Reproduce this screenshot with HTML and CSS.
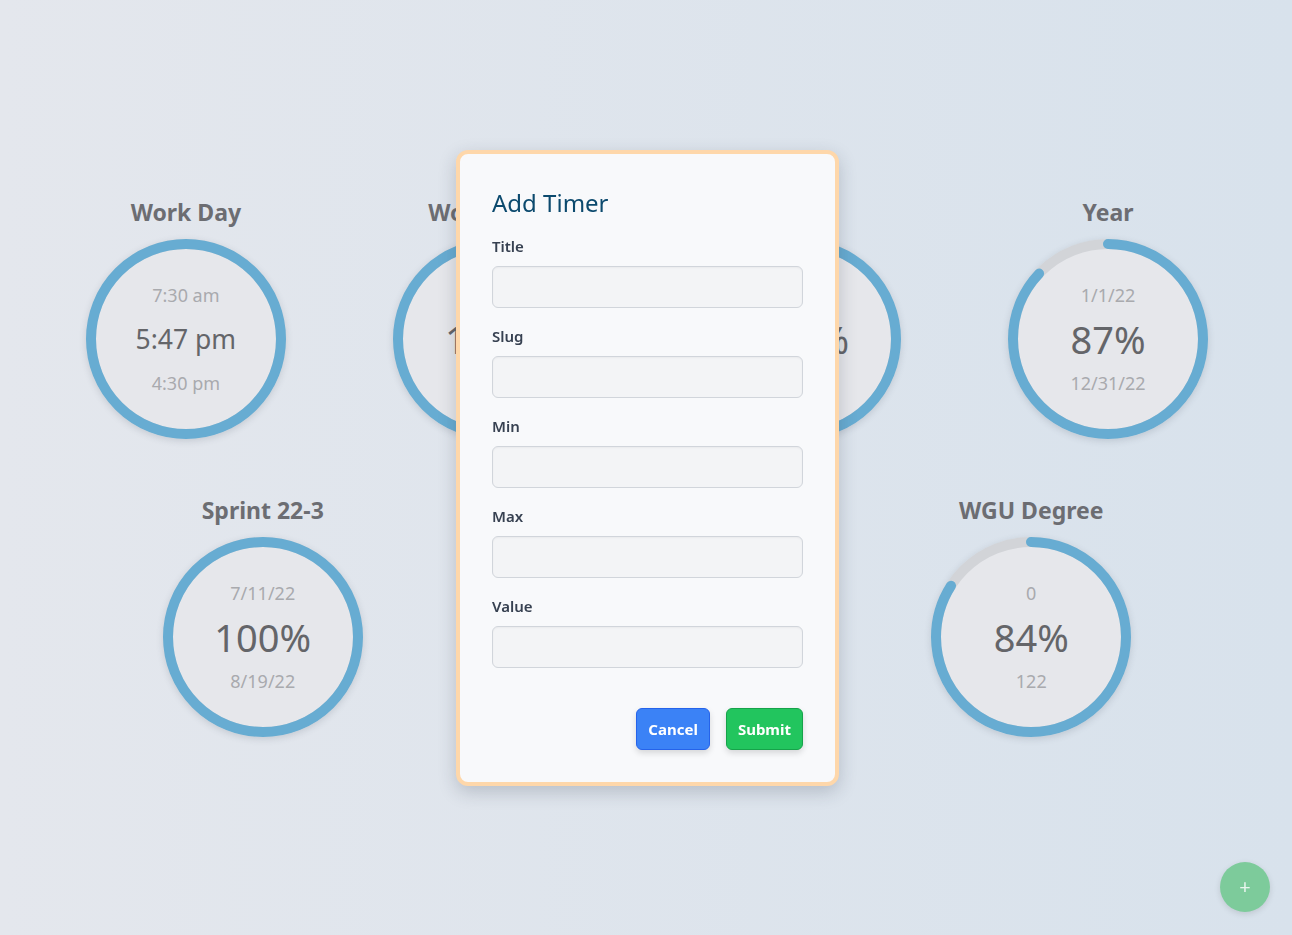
FILE: index.html
```html
<!DOCTYPE html>
<html lang="en">
<head>
<meta charset="utf-8">
<title>Timers</title>
<link rel="stylesheet" href="styles.css">
</head>
<body>
<main class="board">
  <section class="timer">
    <h2 class="timer-title">Work Day</h2>
    <div class="dial">
      <svg class="ring" viewBox="0 0 200 200"><circle class="track" cx="100" cy="100" r="95"/><circle class="progress" cx="100" cy="100" r="95" stroke-dasharray="597 597" transform="rotate(-90 100 100)"/></svg>
      <div class="dial-text"><span class="sub">7:30 am</span><span class="main time">5:47 pm</span><span class="sub">4:30 pm</span></div>
    </div>
  </section>
  <section class="timer">
    <h2 class="timer-title">Work Week</h2>
    <div class="dial">
      <svg class="ring" viewBox="0 0 200 200"><circle class="track" cx="100" cy="100" r="95"/><circle class="progress" cx="100" cy="100" r="95" stroke-dasharray="597 597" transform="rotate(-90 100 100)"/></svg>
      <div class="dial-text"><span class="sub">7/25/22</span><span class="main">100%</span><span class="sub">7/29/22</span></div>
    </div>
  </section>
  <section class="timer">
    <h2 class="timer-title">Month</h2>
    <div class="dial">
      <svg class="ring" viewBox="0 0 200 200"><circle class="track" cx="100" cy="100" r="95"/><circle class="progress" cx="100" cy="100" r="95" stroke-dasharray="597 597" transform="rotate(-90 100 100)"/></svg>
      <div class="dial-text"><span class="sub">7/1/22</span><span class="main">100%</span><span class="sub">7/31/22</span></div>
    </div>
  </section>
  <section class="timer">
    <h2 class="timer-title">Year</h2>
    <div class="dial">
      <svg class="ring" viewBox="0 0 200 200"><circle class="track" cx="100" cy="100" r="95"/><circle class="progress" cx="100" cy="100" r="95" stroke-dasharray="519 597" transform="rotate(-90 100 100)"/></svg>
      <div class="dial-text"><span class="sub">1/1/22</span><span class="main">87%</span><span class="sub">12/31/22</span></div>
    </div>
  </section>
  <section class="timer">
    <h2 class="timer-title">Sprint 22-3</h2>
    <div class="dial">
      <svg class="ring" viewBox="0 0 200 200"><circle class="track" cx="100" cy="100" r="95"/><circle class="progress" cx="100" cy="100" r="95" stroke-dasharray="597 597" transform="rotate(-90 100 100)"/></svg>
      <div class="dial-text"><span class="sub">7/11/22</span><span class="main">100%</span><span class="sub">8/19/22</span></div>
    </div>
  </section>
  <section class="timer">
    <h2 class="timer-title">Quarter</h2>
    <div class="dial">
      <svg class="ring" viewBox="0 0 200 200"><circle class="track" cx="100" cy="100" r="95"/><circle class="progress" cx="100" cy="100" r="95" stroke-dasharray="597 597" transform="rotate(-90 100 100)"/></svg>
      <div class="dial-text"><span class="sub">7/1/22</span><span class="main">100%</span><span class="sub">9/30/22</span></div>
    </div>
  </section>
  <section class="timer">
    <h2 class="timer-title">WGU Degree</h2>
    <div class="dial">
      <svg class="ring" viewBox="0 0 200 200"><circle class="track" cx="100" cy="100" r="95"/><circle class="progress" cx="100" cy="100" r="95" stroke-dasharray="501 597" transform="rotate(-90 100 100)"/></svg>
      <div class="dial-text"><span class="sub">0</span><span class="main">84%</span><span class="sub">122</span></div>
    </div>
  </section>
</main>

<div class="modal">
  <h1 class="modal-title">Add Timer</h1>
  <form class="form">
    <label class="field"><span class="label">Title</span><input class="input" type="text"></label>
    <label class="field"><span class="label">Slug</span><input class="input" type="text"></label>
    <label class="field"><span class="label">Min</span><input class="input" type="text"></label>
    <label class="field"><span class="label">Max</span><input class="input" type="text"></label>
    <label class="field"><span class="label">Value</span><input class="input" type="text"></label>
    <div class="actions">
      <button type="button" class="btn btn-cancel">Cancel</button>
      <button type="button" class="btn btn-submit">Submit</button>
    </div>
  </form>
</div>

<button class="fab" type="button">+</button>
</body>
</html>
```

FILE: styles.css
```css
* { box-sizing: border-box; }

html, body {
  margin: 0;
  padding: 0;
}

body {
  min-height: 100vh;
  font-family: "Noto Sans", "Open Sans", "DejaVu Sans", sans-serif;
  background: linear-gradient(to right, #e4e7ed, #d8e2ec);
  overflow: hidden;
}

.board {
  min-height: 100vh;
  padding: 0 7px 0 9px;
  display: flex;
  flex-wrap: wrap;
  justify-content: space-evenly;
  align-content: center;
  row-gap: 58px;
}

.timer {
  width: 261px;
  display: flex;
  flex-direction: column;
  align-items: center;
  gap: 12px;
}

.timer-title {
  margin: 0 0 2px;
  font-size: 23px;
  line-height: 26px;
  font-weight: 700;
  color: #6c6d72;
  white-space: nowrap;
}

.dial {
  position: relative;
  width: 200px;
  height: 200px;
  border-radius: 50%;
  box-shadow: 0 2px 7px rgba(60, 70, 90, 0.18);
}

.ring {
  display: block;
  width: 200px;
  height: 200px;
}

.track {
  fill: #e6e7eb;
  stroke: #d2d4d8;
  stroke-width: 10;
}

.progress {
  fill: none;
  stroke: #67acd2;
  stroke-width: 10;
  stroke-linecap: round;
}

.dial-text {
  position: absolute;
  inset: 0;
  display: flex;
  flex-direction: column;
  align-items: center;
  justify-content: center;
  gap: 12px;
}

.sub {
  display: block;
  height: 24px;
  line-height: 24px;
  font-size: 18px;
  color: #a9aaae;
}

.main {
  display: block;
  height: 40px;
  line-height: 40px;
  font-size: 38px;
  color: #646569;
}

.main.time {
  font-size: 26.5px;
}

.modal {
  position: fixed;
  left: calc(50% - 190px);
  top: 50%;
  transform: translateY(-50%);
  width: 383px;
  background: #f8f9fb;
  border: 4px solid #fed7aa;
  border-radius: 12px;
  padding: 32px;
  box-shadow: 0 6px 18px rgba(40, 50, 70, 0.22);
}

.modal-title {
  margin: 1px 0 17px;
  font-size: 24px;
  line-height: 32px;
  font-weight: 400;
  color: #0c4a6e;
}

.form {
  display: flex;
  flex-direction: column;
  gap: 18px;
}

.field {
  display: flex;
  flex-direction: column;
  gap: 10px;
}

.label {
  font-size: 15px;
  line-height: 20px;
  font-weight: 600;
  color: #374151;
}

.input {
  display: block;
  width: 100%;
  height: 42px;
  margin: 0;
  border: 1px solid #d1d5db;
  border-radius: 6px;
  background: #f3f4f6;
  font: inherit;
  box-shadow: inset 0 1px 2px rgba(0, 0, 0, 0.04);
}

.actions {
  display: flex;
  justify-content: flex-end;
  gap: 16px;
  margin-top: 22px;
}

.btn {
  height: 42px;
  padding: 0 11px;
  border-radius: 6px;
  font-family: inherit;
  font-size: 15px;
  font-weight: 700;
  color: #ffffff;
  cursor: pointer;
  box-shadow: 0 3px 6px rgba(0, 0, 0, 0.14);
}

.btn-cancel {
  background: #3b82f6;
  border: 1px solid #2563eb;
}

.btn-submit {
  background: #22c55e;
  border: 1px solid #16a34a;
}

.fab {
  position: fixed;
  right: 22px;
  bottom: 23px;
  width: 50px;
  height: 50px;
  border: none;
  border-radius: 50%;
  background: #7dcb9b;
  color: #e9f6ee;
  font-family: inherit;
  font-size: 20px;
  line-height: 50px;
  padding: 0;
  box-shadow: 0 2px 6px rgba(0, 0, 0, 0.12);
}
```
